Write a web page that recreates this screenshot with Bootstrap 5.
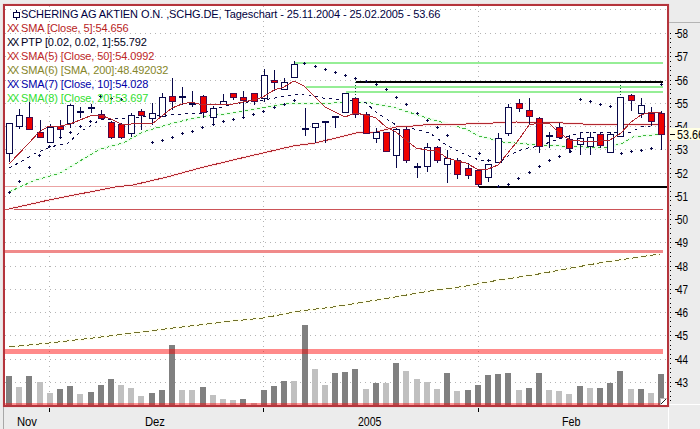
<!DOCTYPE html>
<html lang="de">
<head>
<meta charset="utf-8">
<title>SCHERING AG Tageschart</title>
<link rel="stylesheet" href="https://cdn.jsdelivr.net/npm/bootstrap@5.3.0/dist/css/bootstrap.min.css">
<style>
html,body{margin:0;background:#ececec;overflow:hidden}
.chart-app{width:700px;height:429px;background:#ececec;font-family:"Liberation Sans",Arial,sans-serif;color:#000}
.chart-top{height:407px}
.plot-frame{width:666px;height:403px;margin:4px 0 0 3px;border:2px solid #b4343c;background:#fff;box-shadow:0 0 1px #f0a0a0;box-sizing:border-box}
.plot-frame svg,.axis-pane svg,.date-pane svg{display:block}
.axis-pane{width:31px;height:407px;overflow:hidden}
.date-pane{height:22px}
.legend-box{left:2px;top:1px;font-size:11px;line-height:14px;letter-spacing:-.09px;white-space:nowrap}
.legend-row{height:14px;padding-left:14px}
.legend-mark{display:inline-block;width:14px;margin-left:-14px;letter-spacing:-1.9px;transform:scaleX(.95);transform-origin:left}
.legend-icon{position:absolute;left:4px;top:3px}
.c-title{color:#000040}.c-sma5{color:#b81c1c}.c-ptp{color:#000020}.c-sma50{color:#c02828}.c-sma200{color:#85852a}.c-sma10{color:#0000a8}.c-sma20{color:#30e030}
.svg-txt{font-family:"Liberation Sans",Arial,sans-serif;font-size:12.5px;fill:#000}
</style>
</head>
<body>
<div class="chart-app d-flex flex-column">
  <div class="chart-top d-flex">
    <div class="plot-frame position-relative overflow-hidden">
      <svg id="plot" width="662" height="399" viewBox="5 6 662 399" xmlns="http://www.w3.org/2000/svg"></svg>
      <div class="legend-box position-absolute">
        <svg class="legend-icon" width="11" height="10" viewBox="0 0 11 10"><path d="M5.5 0V10" stroke="#000040"/><rect x="2.5" y="2.5" width="6" height="5" fill="#fff" stroke="#000040"/></svg>
        <div class="legend-row c-title">SCHERING AG AKTIEN O.N. ,SCHG.DE, Tageschart - 25.11.2004 - 25.02.2005 - 53.66</div>
        <div class="legend-row c-sma5"><span class="legend-mark">XX</span>SMA [Close, 5]:54.656</div>
        <div class="legend-row c-ptp"><span class="legend-mark">XX</span>PTP [0.02, 0.02, 1]:55.792</div>
        <div class="legend-row c-sma50"><span class="legend-mark">XX</span>SMA(5) [Close, 50]:54.0992</div>
        <div class="legend-row c-sma200"><span class="legend-mark">XX</span>SMA(6) [SMA, 200]:48.492032</div>
        <div class="legend-row c-sma10"><span class="legend-mark">XX</span>SMA(7) [Close, 10]:54.028</div>
        <div class="legend-row c-sma20"><span class="legend-mark">XX</span>SMA(8) [Close, 20]:53.697</div>
      </div>
    </div>
    <div class="axis-pane">
      <svg id="axis" width="31" height="407" viewBox="669 0 31 407" xmlns="http://www.w3.org/2000/svg"></svg>
    </div>
  </div>
  <div class="date-pane">
    <svg id="dates" width="700" height="22" viewBox="0 407 700 22" xmlns="http://www.w3.org/2000/svg"></svg>
  </div>
</div>
<script src="https://cdn.jsdelivr.net/npm/bootstrap@5.3.0/dist/js/bootstrap.bundle.min.js"></script>
<script>
var NAVY='#08084a';
var X=function(i){return Math.round(9+10.19*i)};
var Y=function(p){return Math.round(33+(58-p)*23.25)};
var s='';
function line(x1,y1,x2,y2,c,w,extra){s+='<line x1="'+x1+'" y1="'+y1+'" x2="'+x2+'" y2="'+y2+'" stroke="'+c+'" stroke-width="'+(w||1)+'" '+(extra||'')+'/>'}
function rect(x,y,w,h,f,extra){s+='<rect x="'+x+'" y="'+y+'" width="'+w+'" height="'+h+'" fill="'+f+'" '+(extra||'')+'/>'}
function poly(pts,c,w,extra){s+='<polyline fill="none" points="'+pts.map(function(p){return p.join(',')}).join(' ')+'" stroke="'+c+'" stroke-width="'+w+'" '+(extra||'')+'/>'}

/* grid */
var gridC='#b4b4b4';
[9.5].concat(Array.from({length:16},function(_,k){return Y(58-k)+.5})).forEach(function(y){line(5,y,667,y,gridC,1,'stroke-dasharray="1 4"')});
[49.5,263.5,478.5].forEach(function(x){line(x,6,x,405,gridC,1,'stroke-dasharray="1 4"')});

/* volume */
var vols=[376,387,376,382,393,389,386,394,392,385,379,385,388,396,393,390,345,390,390,387,395,399,400,399,403,390,386,381,381,325,369,385,373,372,369,389,383,383,363,371,379,382,389,373,391,390,385,375,374,373,390,388,373,390,391,394,386,388,388,383,371,389,389,393,374];
var lights={1:1,3:1,4:1,7:1,11:1,12:1,13:1,17:1,18:1,20:1,21:1,22:1,24:1,28:1,30:1,31:1,35:1,37:1,39:1,40:1,41:1,42:1,44:1,50:1,53:1,54:1,55:1,57:1,61:1,63:1};
vols.forEach(function(t,i){rect(X(i)-3,t,6,405-t,lights[i]?'#c0c0c0':'#808080')});

/* horizontal levels */
rect(5,349,658,5,'#ff0000','fill-opacity=".46"');
rect(5,403,662,2,'#ff0000','fill-opacity=".42"');
rect(5,250,658,3,'#f08a8a');
rect(5,186,474,1,'#eba3a3');
rect(5,209,658,1,'#cc5458');
rect(295,62,368,2,'#96ee96');
rect(306,86,357,2,'#96ee96');
rect(346,91,317,2,'#96ee96');

/* moving averages */
var sma200=[[9,347],[49,343],[93,338],[133,333],[173,328],[233,321],[263,318],[300,311],[333,307],[383,299],[430,291],[466,286],[499,280],[533,275],[566,269],[599,263],[633,258],[660,254]];
poly(sma200,'#fffff0',3);
poly(sma200,'#6f6f2a',1,'stroke-dasharray="6 3" shape-rendering="crispEdges"');
var sma20=[[9,192],[33,181],[60,173],[80,161],[100,149],[123,143],[143,132],[173,123],[200,117],[233,113],[266,107],[293,103],[333,103],[366,102],[396,108],[430,119],[466,129],[479,136],[503,142],[539,145],[583,147],[609,147],[623,143],[633,137],[661,134]];
poly(sma20,'#eeffee',3);
poly(sma20,'#40b840',1,'stroke-dasharray="3 3" shape-rendering="crispEdges"');
var sma10=[[9,168],[22,161],[34,154],[50,147],[68,143],[80,132],[100,120],[130,118],[167,115],[202,113],[233,104],[263,100],[293,95],[304,94],[323,98],[346,100],[366,103],[376,112],[396,125],[406,127],[430,133],[446,145],[466,155],[479,160],[488,160],[499,163],[509,155],[523,149],[539,146],[556,140],[583,132],[613,133],[631,132],[641,127],[659,125]];
poly(sma10,NAVY,1,'stroke-dasharray="3 4" shape-rendering="crispEdges"');
var sma50=[[9,209],[49,200],[115,187],[133,185],[167,177],[200,168],[233,160],[263,153],[293,146],[315,143],[336,138],[356,133],[376,132],[396,127],[413,126],[433,124],[466,124],[493,123],[516,122],[563,123],[583,124],[613,125],[661,124]];
poly(sma50,'#ffeaea',3);
poly(sma50,'#b02830',1,'shape-rendering="crispEdges"');

/* candles: high, top, bottom, low, colour(0 white,1 red,2 cross) */
var c=[[123,123,153,162,0],[109,115,126,129,0],[102,117,129,129,1],[120,132,137,137,1],[124,127,142,143,0],[120,126,129,139,1],[104,105,123,128,0],[107,111,111,118,2],[104,107,107,113,2],[110,114,118,119,1],[121,122,137,139,1],[123,124,137,139,1],[113,115,133,137,0],[109,111,115,130,1],[103,113,118,125,0],[93,97,116,117,0],[78,96,101,110,1],[87,96,96,105,2],[91,103,103,107,2],[95,96,112,118,1],[106,108,117,125,0],[94,101,104,105,0],[93,93,97,100,1],[91,97,100,118,1],[93,93,101,105,1],[69,75,98,102,0],[70,80,82,91,1],[78,82,89,90,0],[61,64,77,78,0],[108,128,128,136,2],[123,123,127,143,0],[121,121,121,143,2],[116,116,116,128,2],[93,93,112,112,0],[82,98,114,118,1],[112,114,133,134,1],[128,132,138,143,0],[132,132,151,152,1],[128,129,155,168,0],[127,129,160,163,1],[163,166,166,178,2],[143,147,166,172,0],[146,147,160,163,1],[150,158,164,183,0],[158,160,174,179,1],[163,168,175,179,1],[170,170,184,187,1],[164,164,177,182,0],[133,138,162,162,0],[104,107,133,136,0],[99,103,108,112,1],[98,110,116,125,1],[117,118,146,153,1],[132,135,135,148,2],[123,127,137,139,1],[135,139,148,153,1],[132,138,144,155,0],[132,137,146,155,0],[133,134,145,148,1],[132,134,152,153,0],[82,97,136,136,0],[94,95,100,111,1],[98,105,113,118,0],[107,113,121,126,1],[111,113,134,150,1]];
var sma5=[[9,164],[29,143],[39,132],[49,126],[60,126],[70,124],[80,120],[90,116],[100,115],[111,119],[121,124],[131,124],[141,123],[152,124],[162,116],[172,108],[182,104],[192,102],[202,105],[213,104],[223,105],[233,104],[243,102],[253,100],[263,97],[274,90],[284,87],[294,81],[304,86],[315,97],[325,107],[335,112],[345,117],[355,113],[366,115],[376,118],[386,127],[396,132],[406,140],[416,148],[427,150],[437,151],[447,158],[457,161],[466,163],[479,170],[488,169],[498,165],[516,143],[520,138],[529,125],[539,123],[549,123],[559,133],[570,140],[580,141],[590,141],[600,141],[610,140],[621,133],[631,122],[641,115],[651,112],[661,113]];
c.forEach(function(d,i){
  var x=X(i)+.5,h=d[0],t=d[1],b=d[2],l=d[3],k=d[4],col=NAVY;
  if(i==34||i==60){line(x,h,x,t,'#0a5a30',1,'stroke-dasharray="1 2"');if(l>b)line(x,b,x,l,col,1)}
  else line(x,h,x,l,col,1);
  if(k==2){rect(x-3.5,t-.5,7,2,col)}
  else rect(x-3,t+.5,6,Math.max(b-t,1),k?'#f00000':'#fff','stroke="'+(k?'#4a0a4a':col)+'" stroke-width="1"');
});
poly(sma5,'#b02830',1,'shape-rendering="crispEdges"');

/* black support and resistance */
rect(356,81,307,2,'#000');
rect(479,186,188,2,'#000');

/* parabolic SAR */
var sar=[[9,192],[19,181],[29,167],[39,155],[49,146],[60,137],[70,132],[80,126],[90,121],[100,96],[111,98],[121,99],[152,142],[162,140],[172,137],[182,133],[192,131],[202,127],[213,124],[223,121],[233,119],[243,117],[253,114],[263,111],[274,107],[284,104],[294,100],[304,63],[315,66],[325,69],[335,72],[345,75],[355,78],[366,81],[376,84],[386,89],[396,97],[406,104],[417,113],[427,120],[437,127],[447,135],[479,153],[488,160],[498,186],[508,184],[518,178],[529,172],[539,166],[549,160],[559,156],[570,151],[580,99],[590,101],[600,104],[610,106],[621,153],[631,151],[641,150],[651,148],[661,84]];
sar.forEach(function(p){rect(p[0]-1,p[1],3,1,NAVY);rect(p[0],p[1]-1,1,3,NAVY)});

/* resize handle */
rect(660,398,7,7,'#fff');
s+='<path d="M661 404 666 399" stroke="#222" stroke-width="1.2" fill="none"/><path d="M660 405 660 398 667 398" stroke="#bbb" fill="none"/>';
document.getElementById('plot').innerHTML='<g shape-rendering="crispEdges">'+s+'</g>';

/* axis */
s='';
line(669,22.5,700,22.5,'#b4b4b4',1);
for(var yy=33;yy<404;yy+=4.65){rect(670,Math.round(yy),1,1,'#000')}
for(var k=0;k<=15;k++){
  var y=Y(58-k);
  rect(675,y,3,1,'#000');
  s+='<text class="svg-txt" x="677" y="'+(y+4.5)+'" textLength="11" lengthAdjust="spacingAndGlyphs">'+(58-k)+'</text>';
}
rect(669,128,31,12,'#ffffe4');
rect(670,134,5,1,'#000');
s+='<text class="svg-txt" x="677" y="138.5" textLength="27" lengthAdjust="spacingAndGlyphs">53.66</text>';
rect(669,404,31,3,'#ececec');
line(669,404.5,700,404.5,'#fff',1);
document.getElementById('axis').innerHTML=s;

/* dates */
s='';
line(3.5,407,3.5,429,'#a8a8a8',1);
line(668.5,407,668.5,429,'#fff',1);
[49.5,263.5,478.5].forEach(function(x){line(x,408,x,412,'#000',1)});
[['Nov',17,20],['Dez',145,20],['2005',358,23.5],['Feb',562,18.5]].forEach(function(d){
  s+='<text class="svg-txt" x="'+d[1]+'" y="425.5" textLength="'+d[2]+'" lengthAdjust="spacingAndGlyphs">'+d[0]+'</text>';
});
document.getElementById('dates').innerHTML=s;
</script>
</body>
</html>
